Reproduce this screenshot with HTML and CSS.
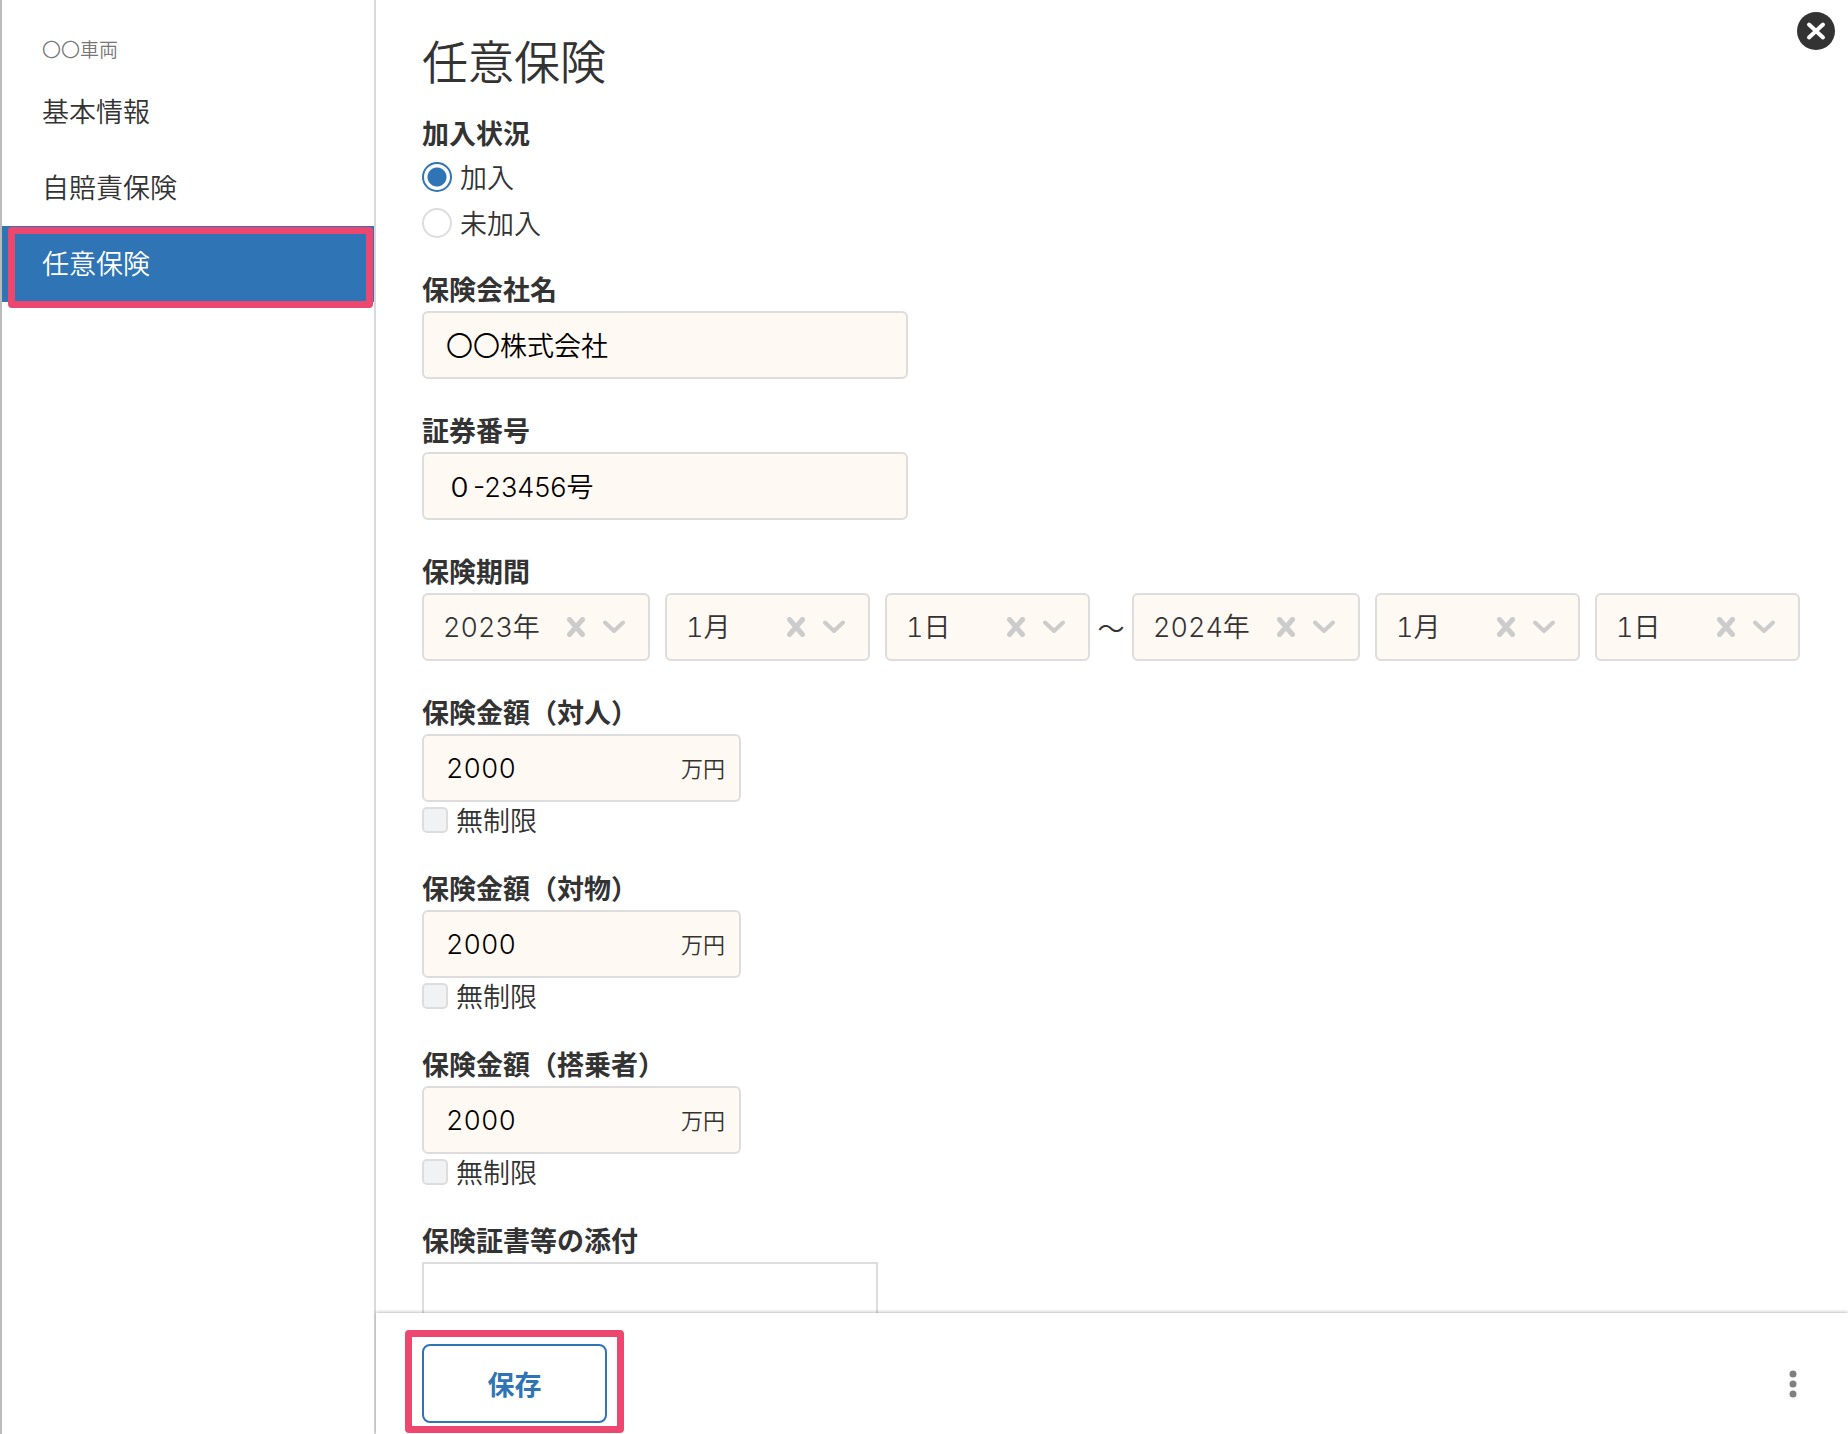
FILE: index.html
```html
<!DOCTYPE html>
<html lang="ja">
<head>
<meta charset="utf-8">
<meta name="viewport" content="width=device-width, initial-scale=1">
<title>任意保険</title>
<link rel="stylesheet" href="styles.css">
</head>
<body>
<svg class="sprite" aria-hidden="true">
  <symbol id="icon-clear" viewBox="0 0 18 20"><path d="M2.5 2.500L15.500 17.500M15.500 2.500L2.500 17.500"/></symbol>
  <symbol id="icon-chevron" viewBox="0 0 22 14"><path d="M2 2.500L11 11L20 2.500"/></symbol>
</svg>
<div class="app">
  <nav class="sidebar" aria-label="車両メニュー">
    <p class="sidebar-title">〇〇車両</p>
    <a class="nav-item" href="#basic">基本情報</a>
    <a class="nav-item" href="#liability">自賠責保険</a>
    <a class="nav-item active marked" href="#voluntary" aria-current="page">任意保険</a>
  </nav>

  <main class="panel">
    <button class="close" type="button" aria-label="閉じる">
      <svg viewBox="0 0 38 38"><circle cx="19" cy="19" r="19"/><path d="M12 12.500L26 25.500M26 12.500L12 25.500"/></svg>
    </button>

    <form class="form" id="insurance">
      <h1>任意保険</h1>

      <fieldset class="field">
        <legend class="label">加入状況</legend>
        <div class="radios">
          <label class="choice"><input type="radio" name="status" checked>加入</label>
          <label class="choice"><input type="radio" name="status">未加入</label>
        </div>
      </fieldset>

      <div class="field">
        <label class="label" for="company">保険会社名</label>
        <input class="text" id="company" type="text" value="〇〇株式会社">
      </div>

      <div class="field">
        <label class="label" for="policy">証券番号</label>
        <input class="text" id="policy" type="text" value="０-23456号">
      </div>

      <fieldset class="field">
        <legend class="label">保険期間</legend>
        <div class="period">
          <div class="dates">
            <div class="select year"><select aria-label="開始年"><option>2023年</option></select><button class="clear" type="button" aria-label="クリア"><svg><use href="#icon-clear"/></svg></button><svg class="chevron"><use href="#icon-chevron"/></svg></div>
            <div class="select"><select aria-label="開始月"><option>1月</option></select><button class="clear" type="button" aria-label="クリア"><svg><use href="#icon-clear"/></svg></button><svg class="chevron"><use href="#icon-chevron"/></svg></div>
            <div class="select"><select aria-label="開始日"><option>1日</option></select><button class="clear" type="button" aria-label="クリア"><svg><use href="#icon-clear"/></svg></button><svg class="chevron"><use href="#icon-chevron"/></svg></div>
          </div>
          <span class="tilde">〜</span>
          <div class="dates">
            <div class="select year"><select aria-label="終了年"><option>2024年</option></select><button class="clear" type="button" aria-label="クリア"><svg><use href="#icon-clear"/></svg></button><svg class="chevron"><use href="#icon-chevron"/></svg></div>
            <div class="select"><select aria-label="終了月"><option>1月</option></select><button class="clear" type="button" aria-label="クリア"><svg><use href="#icon-clear"/></svg></button><svg class="chevron"><use href="#icon-chevron"/></svg></div>
            <div class="select"><select aria-label="終了日"><option>1日</option></select><button class="clear" type="button" aria-label="クリア"><svg><use href="#icon-clear"/></svg></button><svg class="chevron"><use href="#icon-chevron"/></svg></div>
          </div>
        </div>
      </fieldset>

      <div class="field">
        <label class="label" for="person">保険金額（対人）</label>
        <div class="amount"><input id="person" type="text" inputmode="numeric" value="2000"><span class="unit">万円</span></div>
        <label class="choice unlimited"><input type="checkbox">無制限</label>
      </div>

      <div class="field">
        <label class="label" for="property">保険金額（対物）</label>
        <div class="amount"><input id="property" type="text" inputmode="numeric" value="2000"><span class="unit">万円</span></div>
        <label class="choice unlimited"><input type="checkbox">無制限</label>
      </div>

      <div class="field">
        <label class="label" for="passenger">保険金額（搭乗者）</label>
        <div class="amount"><input id="passenger" type="text" inputmode="numeric" value="2000"><span class="unit">万円</span></div>
        <label class="choice unlimited"><input type="checkbox">無制限</label>
      </div>

      <div class="field">
        <div class="label" id="attach-label">保険証書等の添付</div>
        <div class="dropzone" role="group" aria-labelledby="attach-label"></div>
      </div>
    </form>

    <footer class="footer">
      <div class="save-wrap marked"><button class="save" type="submit" form="insurance">保存</button></div>
      <button class="more" type="button" aria-label="その他">
        <svg viewBox="0 0 8 28"><circle cx="4" cy="4" r="3.500"/><circle cx="4" cy="14" r="3.500"/><circle cx="4" cy="24" r="3.500"/></svg>
      </button>
    </footer>
  </main>
</div>
</body>
</html>
```
FILE: styles.css
```css
:root {
  --blue: #2f75b5;
  --pink: #ed476f;
  --ink: #333;
  --line: #ddd;
  --cream: #fff9f3;
}

* {
  box-sizing: border-box;
}

body {
  margin: 0;
  color: var(--ink);
  background: #fff;
  font-family: "Noto Sans CJK JP", sans-serif;
  font-size: 27px;
  font-weight: 350;
}

button,
input,
select {
  margin: 0;
  font: inherit;
  color: inherit;
}

button {
  padding: 0;
  border: 0;
  background: none;
  cursor: pointer;
}

svg {
  display: block;
}

.sprite {
  display: none;
}

.app {
  display: flex;
  height: 100vh;
  border-left: 2px solid #bbb;
}

/* Sidebar */
.sidebar {
  flex: none;
  width: 374px;
  padding-top: 26px;
  border-right: 2px solid #d9d9d9;
}

.sidebar-title {
  margin: 0 0 2px;
  padding-left: 40px;
  line-height: 46px;
  font-size: 19px;
  color: #777;
}

.nav-item {
  display: block;
  padding: 0 0 2px 40px;
  line-height: 74px;
  font-size: 27px;
  color: inherit;
  text-decoration: none;
}

.nav-item.active {
  color: #fff;
  background: var(--blue);
}

/* Highlight frame around the step to perform */
.marked {
  position: relative;
}

.marked::after {
  content: "";
  position: absolute;
  border: 7px solid var(--pink);
  border-radius: 4px;
  pointer-events: none;
}

.nav-item.marked::after {
  inset: 1px 1px -6px 6px;
}

.save-wrap.marked::after {
  inset: -14px -17px -10px -17px;
}

/* Main panel */
.panel {
  position: relative;
  display: flex;
  flex: 1;
  flex-direction: column;
  min-width: 0;
}

.close {
  position: absolute;
  top: 12px;
  right: 13px;
  width: 38px;
  height: 38px;
}

.close circle {
  fill: var(--ink);
}

.close path {
  stroke: #fff;
  stroke-width: 4;
  stroke-linecap: round;
}

.form {
  flex: 1;
  min-height: 0;
  padding: 32px 46px 0;
  overflow-y: auto;
  scrollbar-width: none;
}

h1 {
  margin: 0 0 25px;
  font-size: 46px;
  font-weight: 350;
  line-height: 54px;
}

.field {
  min-width: 0;
  margin: 0 0 29px;
  padding: 0;
  border: 0;
}

.label {
  display: block;
  padding: 0;
  font-weight: 700;
  line-height: 44px;
}

.radios {
  display: grid;
  gap: 15px;
  padding-top: 6px;
}

.choice {
  display: flex;
  align-items: center;
  gap: 8px;
  width: fit-content;
  line-height: 31px;
}

.choice input {
  appearance: none;
  flex: none;
  border: 2px solid var(--line);
}

.choice input[type="radio"] {
  width: 30px;
  height: 30px;
  border-radius: 50%;
}

.choice input[type="radio"]:checked {
  border-color: var(--blue);
  background: radial-gradient(circle, var(--blue) 9px, #fff 10px);
}

.choice input[type="checkbox"] {
  width: 26px;
  height: 26px;
  border-radius: 5px;
  background: #f1f2f3;
}

.unlimited {
  line-height: 35px;
}

.text,
.amount,
.select {
  height: 68px;
  border: 2px solid var(--line);
  border-radius: 6px;
  background: var(--cream);
}

.text {
  display: block;
  width: 486px;
  max-width: 100%;
  padding: 0 22px 2px;
}

.text,
.amount input,
.select select {
  font-family: Inter, "Noto Sans CJK JP", sans-serif;
}

.amount input,
.select select {
  font-variant-numeric: tabular-nums;
}

.text,
.amount input {
  color: #000;
}

.amount {
  display: flex;
  align-items: center;
  width: 319px;
  padding: 0 14px 0 22px;
}

.amount input {
  flex: 1;
  min-width: 0;
  height: 100%;
  padding: 0;
  border: 0;
  background: none;
}

.unit {
  padding-bottom: 2px;
  font-size: 22px;
}

.period {
  display: flex;
  flex-wrap: wrap;
  align-items: center;
}

.dates {
  display: flex;
  gap: 15px;
}

.tilde {
  width: 42px;
  text-align: center;
}

.select {
  position: relative;
  width: 205px;
}

.select.year {
  width: 228px;
}

.select select {
  appearance: none;
  width: 100%;
  height: 100%;
  padding: 0 80px 0 19px;
  border: 0;
  background: none;
}

.clear,
.chevron {
  position: absolute;
  fill: none;
  stroke: #ccc;
  stroke-width: 5;
  stroke-linecap: round;
  stroke-linejoin: round;
}

.clear {
  top: 22px;
  right: 63px;
}

.clear svg {
  width: 18px;
  height: 20px;
}

.chevron {
  top: 25px;
  right: 23px;
  width: 22px;
  height: 14px;
  stroke-width: 4;
  pointer-events: none;
}

.dropzone {
  width: 456px;
  height: 160px;
  border: 2px solid var(--line);
}

/* Footer */
.footer {
  position: relative;
  display: flex;
  align-items: center;
  justify-content: space-between;
  padding: 31px 51px 11px 46px;
  background: #fff;
  box-shadow: 0 -1px 3px rgba(0, 0, 0, 0.25);
}

.save {
  display: block;
  width: 185px;
  height: 79px;
  border: 2px solid var(--blue);
  border-radius: 8px;
  background: #fff;
  color: var(--blue);
  font-weight: 700;
}

.more svg {
  width: 8px;
  height: 28px;
  fill: #808080;
}
```
